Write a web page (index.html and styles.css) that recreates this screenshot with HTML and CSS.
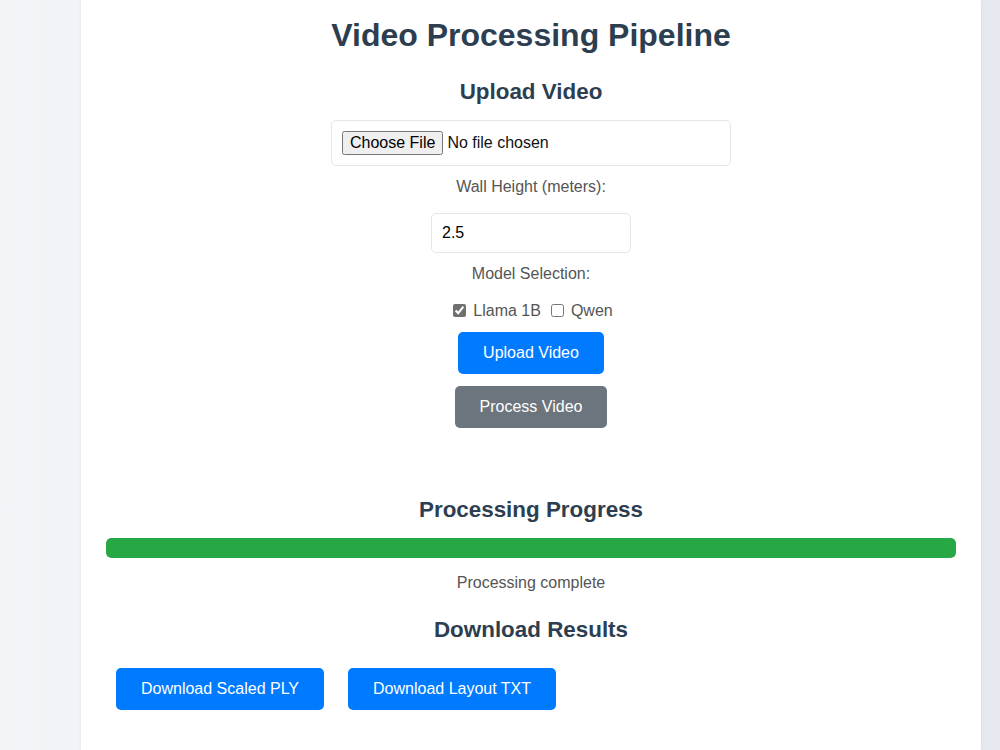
FILE: index.html
```html
<!DOCTYPE html>
<html lang="en">
<head>
<meta charset="utf-8">
<title>Video Processing Pipeline</title>
<link rel="stylesheet" href="styles.css">
</head>
<body>
<main class="card">
  <h1 class="title">Video Processing Pipeline</h1>

  <section class="section upload">
    <h2 class="heading">Upload Video</h2>
    <div class="file-box"><input type="file" class="file-input"></div>
    <label class="field-label" for="wall">Wall Height (meters):</label>
    <input id="wall" class="num-input" type="number" value="2.5" step="0.1">
    <div class="field-label model-label">Model Selection:</div>
    <div class="checks">
      <label class="check"><input type="checkbox" checked> Llama 1B</label>
      <label class="check"><input type="checkbox"> Qwen</label>
    </div>
    <button class="btn btn-primary btn-upload">Upload Video</button>
    <button class="btn btn-secondary btn-process">Process Video</button>
  </section>

  <section class="section progress">
    <h2 class="heading">Processing Progress</h2>
    <div class="bar"><div class="bar-fill" style="width:100%"></div></div>
    <div class="status">Processing complete</div>
  </section>

  <section class="section downloads">
    <h2 class="heading">Download Results</h2>
    <div class="dl-row">
      <button class="btn btn-primary btn-dl">Download Scaled PLY</button>
      <button class="btn btn-primary btn-dl">Download Layout TXT</button>
    </div>
  </section>
</main>
</body>
</html>
```

FILE: styles.css
```css
html, body {
  margin: 0;
  padding: 0;
  height: 100%;
}
body {
  font-family: "Liberation Sans", Arial, sans-serif;
  background: linear-gradient(90deg, #f2f4f8 0%, #e6e9f0 100%);
  overflow: hidden;
}
.card {
  width: 900px;
  box-sizing: border-box;
  margin-left: 81px;
  min-height: 750px;
  background: #ffffff;
  padding: 17px 25px 40px;
  box-shadow: 0 0 4px rgba(40, 50, 80, 0.08);
}
.title {
  margin: 0 0 25px;
  font-size: 32px;
  line-height: 36px;
  font-weight: bold;
  color: #2c3e50;
  text-align: center;
}
.section {
  display: flex;
  flex-direction: column;
  align-items: center;
}
.heading {
  margin: 0;
  padding-top: 1px;
  font-size: 22.4px;
  line-height: 26px;
  font-weight: bold;
  color: #2c3e50;
  text-align: center;
}
.file-box {
  margin-top: 15px;
  width: 400px;
  height: 46px;
  box-sizing: border-box;
  border: 1px solid #e3e6ea;
  border-radius: 5px;
  padding: 0 10px;
  display: flex;
  align-items: center;
}
.file-input {
  font-family: "Liberation Sans", Arial, sans-serif;
  font-size: 16px;
  color: #111;
}
.field-label {
  display: block;
  margin-top: 11px;
  padding-top: 1px;
  font-size: 16px;
  line-height: 18px;
  color: #555;
}
.num-input {
  margin-top: 17px;
  width: 200px;
  height: 40px;
  box-sizing: border-box;
  border: 1px solid #e3e6ea;
  border-radius: 5px;
  padding: 0 10px;
  font-family: "Liberation Sans", Arial, sans-serif;
  font-size: 16px;
  color: #000;
  outline: none;
  -moz-appearance: textfield;
}
.num-input::-webkit-inner-spin-button,
.num-input::-webkit-outer-spin-button {
  -webkit-appearance: none;
  margin: 0;
}
.model-label {
  margin-top: 11px;
}
.checks {
  margin-top: 18px;
  height: 19px;
  display: flex;
  align-items: flex-end;
  gap: 6px;
  font-size: 16px;
  line-height: 18px;
  color: #555;
}
.check {
  display: flex;
  align-items: center;
  height: 18px;
}
.check input {
  margin: 0 7px 0 4px;
  width: 13px;
  height: 13px;
  position: relative;
  top: -1px;
  accent-color: #707070;
}
.btn {
  border: none;
  border-radius: 5px;
  height: 42px;
  padding: 0 25px;
  font-family: "Liberation Sans", Arial, sans-serif;
  font-size: 16px;
  color: #fff;
  cursor: pointer;
}
.btn-primary {
  background: #007bff;
}
.btn-secondary {
  background: #6c757d;
}
.btn-upload {
  margin-top: 12px;
}
.btn-process {
  margin-top: 12px;
}
.progress {
  margin-top: 68px;
}
.bar {
  margin-top: 15px;
  width: 100%;
  height: 20px;
  background: #e9ecef;
  border-radius: 5px;
  overflow: hidden;
}
.bar-fill {
  height: 100%;
  background: #28a745;
  border-radius: 5px;
}
.status {
  margin-top: 15px;
  padding-top: 1px;
  font-size: 16px;
  line-height: 18px;
  color: #555;
}
.downloads {
  margin-top: 24px;
}
.dl-row {
  margin-top: 25px;
  align-self: stretch;
  display: flex;
  gap: 24px;
  padding-left: 10px;
}
```
